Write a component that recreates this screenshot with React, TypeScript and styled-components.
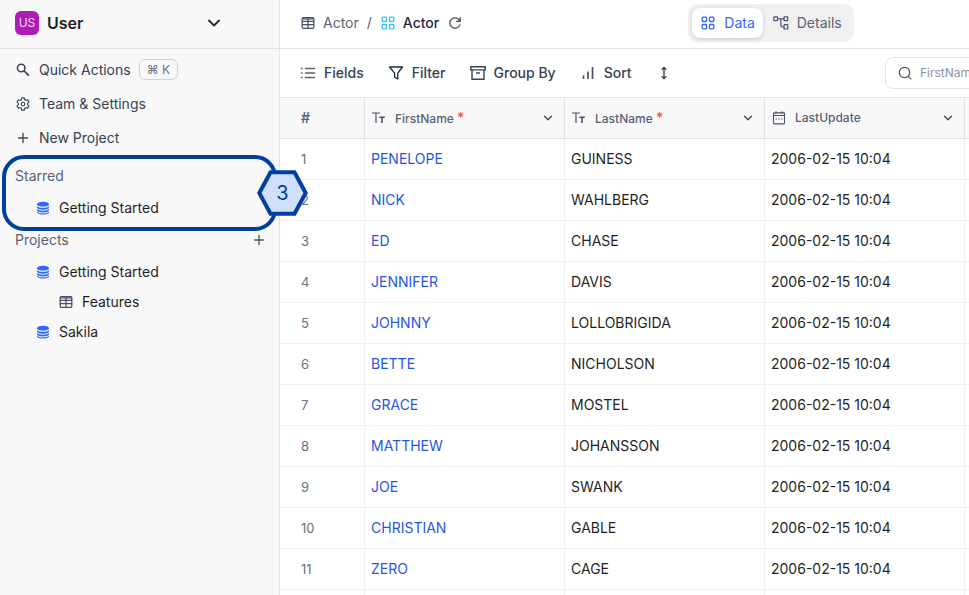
import React from "react";
import styled, { createGlobalStyle } from "styled-components";

const GlobalStyle = createGlobalStyle`
  *, *::before, *::after { box-sizing: border-box; }
  body { margin: 0; font-family: Inter, "Liberation Sans", sans-serif; font-size: 14px; line-height: 20px; color: #1f293a; background: #fff; }
  button, input { font: inherit; color: inherit; }
  button { border: 0; background: none; padding: 0; cursor: pointer; }
  a { text-decoration: none; color: inherit; }
`;

/* ---------- icons ---------- */

const Icon = styled.svg.attrs({ viewBox: "0 0 16 16", fill: "none", "aria-hidden": true })<{ $size?: number; $color?: string }>`
  display: block;
  flex: none;
  width: ${(p) => p.$size ?? 16}px;
  height: ${(p) => p.$size ?? 16}px;
  color: ${(p) => p.$color ?? "#4a5268"};
  stroke: currentColor;
  stroke-linecap: round;
  stroke-linejoin: round;
`;

type IconProps = { size?: number; color?: string };

const ChevronIcon = ({ size, color, weight }: IconProps & { weight: number }) => (
  <Icon $size={size} $color={color}>
    <path d="M4 6l4 4 4-4" strokeWidth={weight} />
  </Icon>
);

const MagnifierIcon = () => (
  <Icon $color="#374151">
    <circle cx="6.2" cy="6" r="3.8" strokeWidth="1.5" />
    <path d="M9.2 9l4.2 4.2" strokeWidth="1.7" />
  </Icon>
);

const GearIcon = () => (
  <Icon $color="#374151">
    <path d="M6.7 1.9h2.6l.4 1.8 1.2.7 1.8-.6 1.3 2.3-1.4 1.2v1.4l1.4 1.2-1.3 2.3-1.8-.6-1.2.7-.4 1.800H6.700l-.4-1.800-1.200-.7-1.800.6L2 9.900l1.400-1.200V7.300L2 6.100l1.300-2.300 1.800.6 1.200-.7z" strokeWidth="1.1" />
    <circle cx="8" cy="8" r="1.8" strokeWidth="1.1" />
  </Icon>
);

const PlusIcon = ({ color }: IconProps) => (
  <Icon $color={color}>
    <path d="M8 3.5v9M3.5 8h9" strokeWidth="1.3" />
  </Icon>
);

const DatabaseIcon = () => (
  <Icon $color="#2f66ff">
    <g fill="currentColor" stroke="none">
      <ellipse cx="8" cy="4.2" rx="6" ry="2.4" />
      <path d="M2 5.900c1.500 2.500 10.500 2.500 12 0v1.600c-1 3-11 3-12 0z" />
      <path d="M2 8.800c1.500 2.500 10.500 2.500 12 0v1.500c-1 3-11 3-12 0z" />
      <path d="M2 11.600c1.500 2.500 10.500 2.500 12 0v.9c-1 2.800-11 2.800-12 0z" />
    </g>
  </Icon>
);

const TableIcon = () => (
  <Icon>
    <rect x="2.200" y="2.700" width="11.600" height="10.600" rx="1" strokeWidth="1.3" />
    <path d="M2.500 3.800h11M2.500 6.300h11M2.500 9.700h11M8 4v9" strokeWidth="1.3" />
  </Icon>
);

const GridIcon = ({ color }: IconProps) => (
  <Icon $color={color}>
    <g strokeWidth="1.3">
      <rect x="2.200" y="2.200" width="4.300" height="4.300" rx="0.800" />
      <rect x="9.500" y="2.200" width="4.300" height="4.300" rx="0.800" />
      <rect x="2.200" y="9.500" width="4.300" height="4.300" rx="0.800" />
      <rect x="9.500" y="9.500" width="4.300" height="4.300" rx="0.800" />
    </g>
  </Icon>
);

const ReloadIcon = () => (
  <Icon>
    <path d="M13.200 2.600v3.800H9.400M12.900 6.200A5.200 5.200 0 1 0 13 9.600" strokeWidth="1.3" />
  </Icon>
);

const ListIcon = () => (
  <Icon $color="#5a6176">
    <path d="M5.500 3.500h9M5.500 8h9M5.500 12.500h9M1.500 3.500h.6M1.500 8h.6M1.500 12.500h.6" strokeWidth="1.5" />
  </Icon>
);

const FunnelIcon = () => (
  <Icon $color="#1f293a">
    <path d="M1.500 2h13L9.800 8.200V14l-3.200-1.800v-4z" strokeWidth="1.3" />
  </Icon>
);

const ArchiveIcon = () => (
  <Icon $color="#374151">
    <path d="M.8 1.700h14.400v3.200H.8zM2 5v9.300h12V5M6.600 8h2.800" strokeLinejoin="miter" strokeWidth="1.4" />
  </Icon>
);

const BarsIcon = () => (
  <Icon>
    <path d="M3.500 10.500V14M8 6.500V14M12.500 2v12" strokeWidth="1.7" strokeLinecap="butt" />
  </Icon>
);

const HeightIcon = () => (
  <Icon $color="#374151">
    <path d="M8 3v10M6.200 4.300L8 2.500l1.800 1.800M6.200 11.700L8 13.500l1.800-1.800" strokeWidth="1.4" />
  </Icon>
);

const SchemaIcon = () => (
  <Icon>
    <g strokeWidth="1.2">
      <rect x="0.800" y="1.900" width="3.800" height="3.800" rx="0.600" />
      <rect x="11" y="1.900" width="3.800" height="3.800" rx="0.600" />
      <rect x="11" y="9.600" width="3.800" height="4.400" rx="0.600" />
      <path d="M4.800 3.800h6M7.800 4v6q0 2 1.600 2h1.400" />
    </g>
  </Icon>
);

const SearchIcon = () => (
  <Icon>
    <circle cx="7.500" cy="7.500" r="5.200" strokeWidth="1.2" />
    <path d="M11.300 11.300l2.500 2.500" strokeWidth="1.2" />
  </Icon>
);

const TextTypeIcon = () => (
  <Icon>
    <path d="M1 3h8M5 3v10" strokeWidth="1.2" strokeLinecap="butt" />
    <path d="M8.200 7.300h5.600M11 7.300V13" strokeWidth="1.6" strokeLinecap="butt" />
  </Icon>
);

const CalendarIcon = () => (
  <Icon>
    <rect x="2.500" y="2.900" width="11" height="11" rx="0.800" strokeWidth="1.1" />
    <path d="M2.500 5.500h11M5 1.500v1.800M11 1.500v1.800M5 9h.4M7.800 9h.4M10.600 9h.4" strokeWidth="1.1" />
  </Icon>
);

/* ---------- shell ---------- */

const Shell = styled.div`
  display: flex;
  height: 100vh;
  overflow: hidden;
`;

const Sidebar = styled.aside`
  position: relative;
  z-index: 1;
  flex: none;
  width: 280px;
  background: #f8f8f9;
  border-right: 1px solid #e1e3e8;
`;

const Workspace = styled.button`
  display: flex;
  align-items: center;
  gap: 8px;
  width: 100%;
  height: 49px;
  padding: 0 55px 3px 15px;
  border-bottom: 1px solid #e1e3e6;
  font-size: 16px;
  font-weight: 600;
  color: #1f1f1f;
`;

const Avatar = styled.span`
  display: grid;
  place-items: center;
  width: 24px;
  height: 24px;
  border-radius: 6px;
  background: #ae1cb8;
  color: #f7dcf8;
  font-size: 12px;
  font-weight: 400;
`;

const WorkspaceName = styled.span`
  flex: 1;
  text-align: left;
`;

const QuickNav = styled.nav`
  display: flex;
  flex-direction: column;
  padding: 4px 0 5px;
`;

const QuickLink = styled.button`
  display: flex;
  align-items: center;
  gap: 8px;
  height: 34px;
  padding: 0 15px;
  color: #374151;
`;

const Shortcut = styled.kbd`
  height: 21px;
  margin-bottom: 2px;
  padding: 0 7px;
  border: 1px solid #cfd2da;
  border-radius: 6px;
  font: 12px/19px Inter, "DejaVu Sans", sans-serif;
  color: #6a7184;
`;

const Section = styled.section`
  position: relative;
`;

const SectionHeader = styled.div`
  display: flex;
  align-items: center;
  justify-content: space-between;
  height: 32px;
  padding: 0 12px 0 15px;
`;

const SectionTitle = styled.h2`
  margin: 0;
  font-size: 14px;
  line-height: 20px;
  font-weight: 400;
  color: #5a6176;
`;

const Tree = styled.ul`
  margin: 0;
  padding: 1px 0;
  list-style: none;
`;

const TreeLink = styled.a<{ $level: number }>`
  display: flex;
  align-items: center;
  gap: 8px;
  height: 30px;
  padding-left: ${(p) => 12 + p.$level * 23}px;
  color: #1f1f1f;
`;

const Callout = styled.div`
  position: absolute;
  inset: -5px 2px -7px 2px;
  border: 4px solid #003f9e;
  border-radius: 22px;
  pointer-events: none;
`;

const StepMarker = styled.div`
  position: absolute;
  top: 10px;
  right: -29px;
  display: grid;
  place-items: center;
  width: 51px;
  height: 46px;
  font-size: 20px;
  color: #003f9e;
  pointer-events: none;
`;

const Hexagon = styled.svg`
  grid-area: 1 / 1;
`;

const StepNumber = styled.span`
  grid-area: 1 / 1;
  z-index: 1;
`;

/* ---------- main ---------- */

const Main = styled.main`
  flex: 1;
  min-width: 0;
  overflow: hidden;
`;

const Board = styled.div`
  min-width: 982px;
`;

const TopBar = styled.header`
  display: grid;
  grid-template-columns: 1fr auto 1fr;
  align-items: center;
  height: 49px;
  padding: 0 20px 2px;
  border-bottom: 1px solid #e1e3e6;
`;

const Crumbs = styled.nav`
  display: flex;
  align-items: center;
  gap: 8px;
  color: #5a6176;
`;

const Crumb = styled.a<{ $current?: boolean }>`
  display: flex;
  align-items: center;
  gap: 7px;
  font-weight: ${(p) => (p.$current ? 500 : 400)};
  color: ${(p) => (p.$current ? "#1f293a" : "#5a6176")};
`;

const Switcher = styled.div`
  display: flex;
  gap: 2px;
  padding: 4px;
  border-radius: 9px;
  background: #f1f1f2;
`;

const SwitchTab = styled.button<{ $active?: boolean }>`
  display: flex;
  align-items: center;
  gap: 8px;
  height: 30px;
  padding: 0 8px;
  border-radius: 8px;
  color: ${(p) => (p.$active ? "#3366ff" : "#5a6176")};
  background: ${(p) => (p.$active ? "#fff" : "transparent")};
  box-shadow: ${(p) => (p.$active ? "0 1px 4px rgba(0, 0, 0, 0.16)" : "none")};
`;

const Toolbar = styled.div`
  display: flex;
  align-items: center;
  gap: 24px;
  height: 49px;
  padding: 0 12px 0 20px;
  border-bottom: 1px solid #e1e3e6;
`;

const ToolButton = styled.button`
  display: flex;
  align-items: center;
  gap: 8px;
  font-weight: 500;
  color: #374151;
`;

const SearchBox = styled.label`
  display: flex;
  align-items: center;
  gap: 7px;
  width: 365px;
  height: 32px;
  margin-left: auto;
  padding: 0 11px;
  border: 1px solid #e1e3e8;
  border-radius: 8px;
`;

const SearchInput = styled.input`
  flex: 1;
  min-width: 0;
  padding: 0;
  border: 0;
  outline: 0;
  background: none;
  font-size: 12px;
  &::placeholder { color: #8a91a1; opacity: 1; }
`;

const Grid = styled.table`
  width: 100%;
  table-layout: fixed;
  border-collapse: separate;
  border-spacing: 0;
`;

const Column = styled.col<{ $width?: number }>`
  width: ${(p) => (p.$width ? `${p.$width}px` : "auto")};
`;

const HeadCell = styled.th`
  height: 41px;
  padding: 0 8px 0 6px;
  border-right: 1px solid #e1e3e6;
  border-bottom: 1px solid #e1e3e6;
  background: #f8f8f9;
  font-size: 12px;
  font-weight: 500;
  text-align: left;
  color: #5a6176;
`;

const IndexHead = styled(HeadCell)`
  padding-left: 21px;
  font-size: 14px;
  font-weight: 600;
`;

const HeadContent = styled.div`
  display: flex;
  align-items: center;
  gap: 8px;
`;

const HeadLabel = styled.span`
  flex: 1;
`;

const Required = styled.span`
  color: #ff4a3f;
  font-size: 14px;
`;

const MenuButton = styled.button`
  display: block;
  padding: 0 1px;
`;

const Cell = styled.td<{ $primary?: boolean }>`
  height: 41px;
  padding: 0 6px;
  border-right: 1px solid #f0f0f2;
  border-bottom: 1px solid #f0f0f2;
  color: ${(p) => (p.$primary ? "#1f56e6" : "#1f1f1f")};
`;

const IndexCell = styled(Cell)`
  padding-left: 21px;
  font-size: 13px;
  color: #6a7184;
`;

const actors = [
  ["PENELOPE", "GUINESS"],
  ["NICK", "WAHLBERG"],
  ["ED", "CHASE"],
  ["JENNIFER", "DAVIS"],
  ["JOHNNY", "LOLLOBRIGIDA"],
  ["BETTE", "NICHOLSON"],
  ["GRACE", "MOSTEL"],
  ["MATTHEW", "JOHANSSON"],
  ["JOE", "SWANK"],
  ["CHRISTIAN", "GABLE"],
  ["ZERO", "CAGE"],
];

const columns = [
  { name: "FirstName", required: true, icon: <TextTypeIcon /> },
  { name: "LastName", required: true, icon: <TextTypeIcon /> },
  { name: "LastUpdate", required: false, icon: <CalendarIcon /> },
];

export default function App() {
  return (
    <Shell>
      <GlobalStyle />
      <Sidebar>
        <Workspace>
          <Avatar>US</Avatar>
          <WorkspaceName>User</WorkspaceName>
          <ChevronIcon size={20} color="#1f293a" weight={1.5} />
        </Workspace>
        <QuickNav>
          <QuickLink>
            <MagnifierIcon />
            Quick Actions
            <Shortcut>⌘ K</Shortcut>
          </QuickLink>
          <QuickLink>
            <GearIcon />
            Team &amp; Settings
          </QuickLink>
          <QuickLink>
            <PlusIcon color="#374151" />
            New Project
          </QuickLink>
        </QuickNav>
        <Section>
          <SectionHeader>
            <SectionTitle>Starred</SectionTitle>
          </SectionHeader>
          <Tree>
            <li><TreeLink href="#starred" $level={1}><DatabaseIcon />Getting Started</TreeLink></li>
          </Tree>
          <Callout />
          <StepMarker>
            <Hexagon width="51" height="46" viewBox="0 0 51 46">
              <path d="M2.300 23L13.500 2.200h24L48.700 23 37.500 43.800h-24z" fill="#d0e0fc" stroke="#003f9e" strokeWidth="4" />
            </Hexagon>
            <StepNumber>3</StepNumber>
          </StepMarker>
        </Section>
        <Section>
          <SectionHeader>
            <SectionTitle>Projects</SectionTitle>
            <button aria-label="Add project"><PlusIcon /></button>
          </SectionHeader>
          <Tree>
            <li><TreeLink href="#getting-started" $level={1}><DatabaseIcon />Getting Started</TreeLink></li>
            <li><TreeLink href="#features" $level={2}><TableIcon />Features</TreeLink></li>
            <li><TreeLink href="#sakila" $level={1}><DatabaseIcon />Sakila</TreeLink></li>
          </Tree>
        </Section>
      </Sidebar>
      <Main>
        <Board>
          <TopBar>
            <Crumbs>
              <Crumb href="#table"><TableIcon />Actor</Crumb>
              <span>/</span>
              <Crumb href="#view" $current><GridIcon color="#36bfff" />Actor</Crumb>
              <button aria-label="Reload"><ReloadIcon /></button>
            </Crumbs>
            <Switcher>
              <SwitchTab $active><GridIcon color="#3366ff" />Data</SwitchTab>
              <SwitchTab><SchemaIcon />Details</SwitchTab>
            </Switcher>
          </TopBar>
          <Toolbar>
            <ToolButton><ListIcon />Fields</ToolButton>
            <ToolButton><FunnelIcon />Filter</ToolButton>
            <ToolButton><ArchiveIcon />Group By</ToolButton>
            <ToolButton><BarsIcon />Sort</ToolButton>
            <ToolButton aria-label="Row height"><HeightIcon /></ToolButton>
            <SearchBox>
              <SearchIcon />
              <SearchInput aria-label="Search" placeholder="FirstName" />
            </SearchBox>
          </Toolbar>
          <Grid>
            <colgroup>
              <Column $width={85} />
              <Column $width={200} />
              <Column $width={200} />
              <Column $width={200} />
              <Column />
            </colgroup>
            <thead>
              <tr>
                <IndexHead>#</IndexHead>
                {columns.map((c) => (
                  <HeadCell key={c.name}>
                    <HeadContent>
                      {c.icon}
                      <HeadLabel>{c.name} {c.required && <Required>*</Required>}</HeadLabel>
                      <MenuButton aria-label={`${c.name} menu`}><ChevronIcon size={14} color="#374151" weight={1.4} /></MenuButton>
                    </HeadContent>
                  </HeadCell>
                ))}
                <HeadCell />
              </tr>
            </thead>
            <tbody>
              {actors.map(([first, last], i) => (
                <tr key={first}>
                  <IndexCell>{i + 1}</IndexCell>
                  <Cell $primary>{first}</Cell>
                  <Cell>{last}</Cell>
                  <Cell>2006-02-15 10:04</Cell>
                  <Cell />
                </tr>
              ))}
              <tr>
                <IndexCell />
                <Cell />
                <Cell />
                <Cell />
                <Cell />
              </tr>
            </tbody>
          </Grid>
        </Board>
      </Main>
    </Shell>
  );
}
